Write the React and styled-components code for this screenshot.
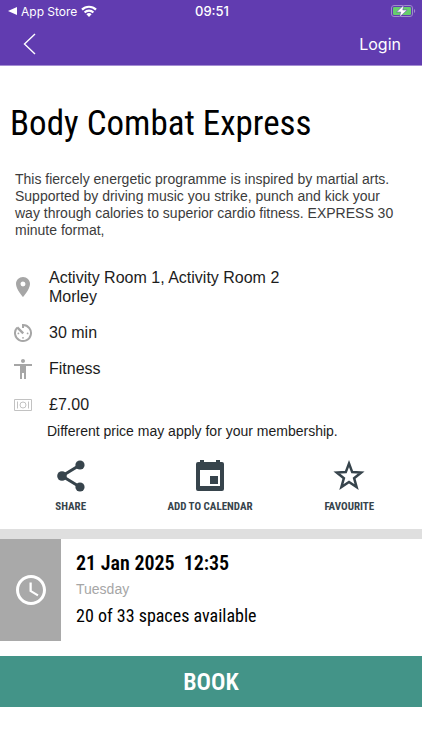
import React from "react";
import styled, { createGlobalStyle } from "styled-components";
import { MdAccessibility, MdAccessTime, MdPlace } from "react-icons/md";

export default function App() {
  return (
    <>
      <GlobalStyle />
      <Header>
        <StatusBar>
          <StatusSide>
            <BackToApp />
            <span>App Store</span>
            <Wifi />
          </StatusSide>
          <Clock>09:51</Clock>
          <StatusSide $end>
            <Battery />
          </StatusSide>
        </StatusBar>
        <NavBar>
          <BackButton type="button" aria-label="Back">
            <svg width="13" height="22" viewBox="0 0 13 22" fill="none">
              <path d="M12 1 1.5 11 12 21" stroke="#fff" strokeWidth="1.4" />
            </svg>
          </BackButton>
          <LoginLink href="#login">Login</LoginLink>
        </NavBar>
      </Header>
      <main>
        <Title>Body Combat Express</Title>
        <Description>
          This fiercely energetic programme is inspired by martial arts.
          Supported by driving music you strike, punch and kick your way through
          calories to superior cardio fitness. EXPRESS 30 minute format,
        </Description>
        <Details>
          <Detail>
            <MdPlace size={24} />
            <span>
              Activity Room 1, Activity Room 2<br />
              Morley
            </span>
          </Detail>
          <Detail>
            <Timer />
            <span>30 min</span>
          </Detail>
          <Detail>
            <MdAccessibility size={24} />
            <span>Fitness</span>
          </Detail>
          <Detail>
            <Banknote />
            <span>£7.00</span>
          </Detail>
        </Details>
        <PriceNote>Different price may apply for your membership.</PriceNote>
        <Actions>
          <Action type="button">
            <Share />
            Share
          </Action>
          <Action type="button">
            <Calendar />
            Add to calendar
          </Action>
          <Action type="button">
            <Star />
            Favourite
          </Action>
        </Actions>
        <Session>
          <SessionIcon>
            <MdAccessTime size={36} />
          </SessionIcon>
          <SessionInfo>
            <SessionDate>
              <span>21 Jan 2025</span>
              <span>12:35</span>
            </SessionDate>
            <Weekday>Tuesday</Weekday>
            <Spaces>20 of 33 spaces available</Spaces>
          </SessionInfo>
        </Session>
        <BookButton type="button">Book</BookButton>
      </main>
    </>
  );
}

function BackToApp() {
  return (
    <svg width="9" height="8" viewBox="0 0 9 8">
      <path d="M0 4 9 0v8z" fill="#fff" />
    </svg>
  );
}

function Wifi() {
  return (
    <svg width="16" height="12" viewBox="0 0 16 12" fill="none">
      <g stroke="#fff" strokeWidth="2.2">
        <path d="M1 4.6a10 10 0 0 1 14 0" />
        <path d="M3.6 7.5a6.2 6.2 0 0 1 8.8 0" />
      </g>
      <path d="M8 12 5.4 9.3a3.7 3.7 0 0 1 5.2 0z" fill="#fff" />
    </svg>
  );
}

function Battery() {
  return (
    <svg width="25" height="12" viewBox="0 0 25 12">
      <rect
        x="0.5"
        y="0.5"
        width="21"
        height="11"
        rx="2.5"
        fill="none"
        stroke="#a08bcd"
      />
      <rect x="2" y="2" width="18" height="8" rx="1.2" fill="#66cf6c" />
      <path d="M23 4v4c1.6-.6 1.6-3.4 0-4z" fill="#a08bcd" />
      <path
        d="M12.8 0 5.6 7h4.1L8.6 12l7.5-7h-4.3z"
        fill="#fff"
        stroke="#613cb0"
        strokeWidth="0.5"
      />
    </svg>
  );
}

function Timer() {
  return (
    <svg width="20" height="20" viewBox="0 0 20 20" fill="none">
      <g stroke="currentColor" strokeWidth="2">
        <path d="M10 5V2a8 8 0 1 1-5.9 2.6" />
        <path d="m4.2 4.4 6 6" strokeWidth="2.4" />
      </g>
      <g fill="currentColor">
        <circle cx="5.4" cy="10.4" r="0.9" />
        <circle cx="14.6" cy="10.4" r="0.9" />
        <circle cx="10" cy="14.8" r="0.9" />
      </g>
    </svg>
  );
}

function Banknote() {
  return (
    <svg width="18" height="12" viewBox="0 0 18 12" fill="none" stroke="#c2c2c2">
      <path d="M.5.5h17v11H.5z" />
      <path d="M3.5 2.500v7M14.500 2.500v7" />
      <circle cx="9" cy="6" r="3" />
    </svg>
  );
}

function Share() {
  return (
    <svg width="36" height="36" viewBox="0 0 36 36" fill="currentColor">
      <path
        d="M27 7 9 18l18 11"
        fill="none"
        stroke="currentColor"
        strokeWidth="3"
      />
      <circle cx="9" cy="18" r="4.8" />
      <circle cx="27" cy="7" r="4.6" />
      <circle cx="27" cy="29" r="4.6" />
    </svg>
  );
}

function Calendar() {
  return (
    <svg width="36" height="36" viewBox="0 0 36 36" fill="currentColor">
      <path
        fillRule="evenodd"
        d="M8 2h4v2h12V2h4v2h2a2 2 0 0 1 2 2v25a2 2 0 0 1-2 2H6a2 2 0 0 1-2-2V6a2 2 0 0 1 2-2h2zM8 12v16h20V12z"
      />
      <path d="M18 18h8v8h-8z" />
    </svg>
  );
}

function Star() {
  return (
    <svg width="36" height="36" viewBox="0 0 36 36" fill="none">
      <path
        d="m18 5.500 3.200 8.600 9 .400-7.100 5.700 2.500 8.800-7.600-5-7.600 5 2.500-8.800-7.100-5.700 9-.400z"
        stroke="currentColor"
        strokeWidth="2.5"
      />
    </svg>
  );
}

const GlobalStyle = createGlobalStyle`
  * {
    box-sizing: border-box;
  }
  body {
    margin: 0;
    background-color: #fff;
    color: #1c1c1c;
    font-family: "Liberation Sans", Arial, sans-serif;
  }
  button {
    padding: 0;
    border: none;
    background: none;
    cursor: pointer;
  }
  svg {
    display: block;
    flex-shrink: 0;
  }
`;

const condensed = `"Roboto Condensed", "Liberation Sans Narrow", sans-serif`;

const Header = styled.header`
  background-color: #613cb0;
  color: #fff;
  border-bottom: 1px solid #a48dd2;
`;

const StatusBar = styled.div`
  display: grid;
  grid-template-columns: 1fr auto 1fr;
  align-items: center;
  height: 22px;
  padding: 0 6px 0 8px;
  font-family: Inter, sans-serif;
  font-size: 12px;
`;

const StatusSide = styled.div`
  display: flex;
  align-items: center;
  gap: 4px;
  justify-content: ${({ $end }) => ($end ? "flex-end" : "flex-start")};
`;

const Clock = styled.span`
  font-size: 13px;
  font-weight: 500;
`;

const NavBar = styled.nav`
  display: flex;
  align-items: center;
  justify-content: space-between;
  height: 43px;
  padding: 0 21px 0 23px;
`;

const BackButton = styled.button`
  display: flex;
`;

const LoginLink = styled.a`
  color: #fff;
  font-family: Inter, sans-serif;
  font-size: 16px;
  text-decoration: none;
`;

const Title = styled.h1`
  margin: 37px 10px 26px;
  color: #000;
  font-family: ${condensed};
  font-size: 35px;
  font-weight: 400;
  line-height: 42px;
`;

const Description = styled.p`
  margin: 0 15px;
  color: #3c3c3c;
  font-size: 14px;
  line-height: 17px;
`;

const Details = styled.ul`
  display: flex;
  flex-direction: column;
  gap: 17px;
  margin: 29px 0 7px;
  padding: 0 15px 0 10px;
  list-style: none;
`;

const Detail = styled.li`
  display: grid;
  grid-template-columns: 26px 1fr;
  gap: 13px;
  align-items: center;
  font-size: 16px;
  line-height: 19px;
  svg {
    justify-self: center;
    margin: -3px 0;
    color: #a6a6a6;
  }
`;

const PriceNote = styled.p`
  margin: 0 15px 0 47px;
  font-size: 14px;
  line-height: 20px;
`;

const Actions = styled.div`
  display: grid;
  grid-template-columns: repeat(3, 1fr);
  padding: 17px 3px 14px 1px;
`;

const Action = styled.button`
  display: flex;
  flex-direction: column;
  align-items: center;
  gap: 5px;
  color: #37444c;
  font-family: ${condensed};
  font-size: 11px;
  font-weight: 700;
  line-height: 16px;
  text-transform: uppercase;
`;

const Session = styled.section`
  display: flex;
  border-top: 10px solid #dfdfdf;
`;

const SessionIcon = styled.div`
  display: flex;
  align-items: center;
  justify-content: center;
  width: 61px;
  background-color: #a9a9a9;
  color: #fff;
`;

const SessionInfo = styled.div`
  padding: 11px 15px;
`;

const SessionDate = styled.div`
  display: flex;
  gap: 9px;
  color: #000;
  font-family: ${condensed};
  font-size: 20px;
  font-weight: 600;
  line-height: 26px;
`;

const Weekday = styled.div`
  color: #a6a6a6;
  font-size: 14px;
  line-height: 26px;
`;

const Spaces = styled.div`
  color: #000;
  font-family: ${condensed};
  font-size: 18px;
  line-height: 28px;
`;

const BookButton = styled.button`
  display: block;
  width: 100%;
  height: 51px;
  margin-top: 15px;
  background-color: #439488;
  color: #fff;
  font-family: ${condensed};
  font-size: 24px;
  font-weight: 600;
  text-transform: uppercase;
`;
